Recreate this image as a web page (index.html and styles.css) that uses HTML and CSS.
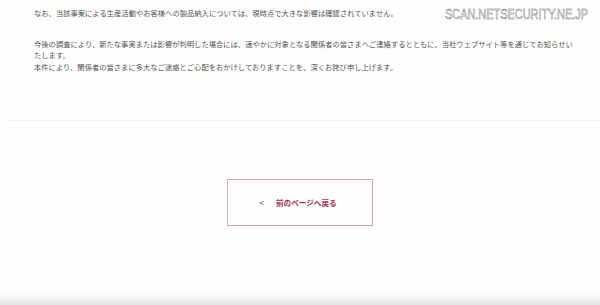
FILE: index.html
```html
<!DOCTYPE html>
<html lang="ja">
<head>
    <meta charset="UTF-8">
    <meta name="viewport" content="width=device-width, initial-scale=1.0">
    <title>お知らせ</title>
    <link rel="stylesheet" href="styles.css">
</head>
<body>

    <div class="watermark">SCAN.NETSECURITY.NE.JP</div>

    <main class="article">
        <p>なお、当該事案による生産活動やお客様への製品納入については、現時点で大きな影響は確認されていません。</p>
        <p>今後の調査により、新たな事実または影響が判明した場合には、速やかに対象となる関係者の皆さまへご連絡するとともに、当社ウェブサイト等を通じてお知らせいたします。<br>
        本件により、関係者の皆さまに多大なご迷惑とご心配をおかけしておりますことを、深くお詫び申し上げます。</p>
    </main>

    <hr class="divider">

    <div class="back">
        <a class="back-button" href="#">
            <span class="back-arrow">&lt;</span>
            <span class="back-label">前のページへ戻る</span>
        </a>
    </div>

    <div class="bottom-shade"></div>

</body>
</html>
```

FILE: styles.css
```css
body {
    font-family: "Noto Sans CJK JP", "Noto Sans", sans-serif;
    background-color: #fefefe;
    color: #555555;
    margin: 0;
    padding: 0;
    width: 600px;
    height: 305px;
    overflow: hidden;
    position: relative;
}

.watermark {
    position: absolute;
    top: 6px;
    left: 445px;
    font-family: "Liberation Sans", Arial, sans-serif;
    font-size: 14px;
    color: #f6f6f6;
    transform: scaleX(0.78);
    transform-origin: left top;
    -webkit-text-stroke: 0.4px #555555;
    white-space: nowrap;
}

.article {
    width: 539px;
    padding: 8px 0 0 34px;
    font-size: 7.3px;
    line-height: 11.6px;
}

.article p {
    margin: 0 0 19px 0;
}

.divider {
    border: none;
    border-top: 1px solid #f2f2f2;
    margin: 47px 0 0 5px;
}

.back {
    display: flex;
    justify-content: center;
    padding-top: 58px;
}

.back-button {
    display: flex;
    align-items: center;
    width: 146px;
    height: 47px;
    border: 1px solid #c7a9b3;
    border-left-color: #e0a8b8;
    text-decoration: none;
    box-sizing: border-box;
    padding-left: 31px;
}

.back-arrow {
    font-size: 9px;
    color: #666666;
    width: 17px;
}

.back-label {
    font-size: 7.6px;
    font-weight: bold;
    color: #a6335c;
}

.bottom-shade {
    position: absolute;
    left: 0;
    right: 0;
    bottom: 0;
    height: 12px;
    background: linear-gradient(to bottom, rgba(0, 0, 0, 0), rgba(0, 0, 0, 0.1));
}
```
